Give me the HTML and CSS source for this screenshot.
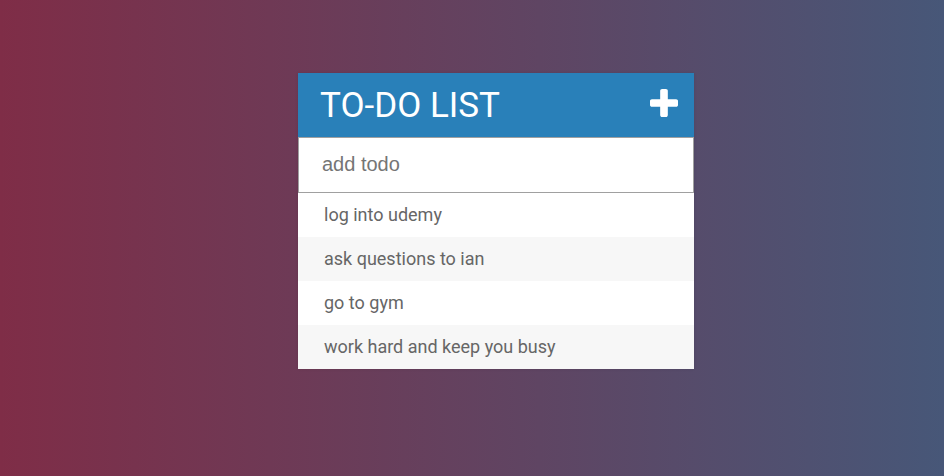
FILE: index.html
```html
<!DOCTYPE html>
<html lang="en">
<head>
  <meta charset="utf-8">
  <meta name="viewport" content="width=device-width, initial-scale=1">
  <title>To-Do List</title>
  <link rel="stylesheet" href="styles.css">
</head>
<body>
  <main class="todo">
    <header class="todo-header">
      <h1 class="todo-title">To-Do List</h1>
      <button class="todo-toggle" type="button" aria-label="Toggle new todo">
        <svg class="icon-plus" viewBox="0 0 1408 1408" aria-hidden="true"><path d="M1408 608v192q0 40-28 68t-68 28H896v416q0 40-28 68t-68 28H608q-40 0-68-28t-28-68V896H96q-40 0-68-28T0 800V608q0-40 28-68t68-28h416V96q0-40 28-68t68-28h192q40 0 68 28t28 68v416h416q40 0 68 28t28 68z"/></svg>
      </button>
    </header>
    <input class="todo-input" type="text" placeholder="add todo" aria-label="add todo">
    <ul class="todo-items">
      <li class="todo-item">log into udemy</li>
      <li class="todo-item">ask questions to ian</li>
      <li class="todo-item">go to gym</li>
      <li class="todo-item">work hard and keep you busy</li>
    </ul>
  </main>
</body>
</html>
```
FILE: styles.css
```css
* {
  box-sizing: border-box;
}

body {
  margin: 0;
  min-height: 100vh;
  padding: 73px 16px 24px 64px;
  background: linear-gradient(to right, #7f2d47, #475778);
  font-family: Roboto, sans-serif;
}

.todo {
  width: 100%;
  max-width: 396px;
  margin: 0 auto;
  background: #fff;
  box-shadow: 0 0 3px rgba(0, 0, 0, 0.1);
}

.todo-header {
  display: flex;
  align-items: flex-start;
  justify-content: space-between;
  padding: 2px 16px 0 22px;
  background: #2980b9;
  color: #fff;
}

.todo-title {
  margin: 0;
  font-size: 35px;
  font-weight: 400;
  line-height: 62px;
  text-transform: uppercase;
}

.todo-toggle {
  display: flex;
  padding: 14px 0;
  border: 0;
  background: none;
  color: inherit;
  cursor: pointer;
}

.icon-plus {
  width: 28px;
  height: 28px;
  fill: currentColor;
}

.todo-input {
  display: block;
  width: 100%;
  height: 56px;
  padding: 0 23px 2px;
  border: 1px solid #a0a0a0;
  border-radius: 0;
  background: #fff;
  color: #666;
  font: 20px/24px "Liberation Sans", Arial, sans-serif;
}

.todo-input::placeholder {
  color: #757575;
  opacity: 1;
}

.todo-items {
  margin: 0;
  padding: 0;
  list-style: none;
}

.todo-item {
  padding: 0 26px;
  color: #666;
  font-size: 18px;
  line-height: 44px;
}

.todo-item:nth-child(even) {
  background: #f7f7f7;
}
```
